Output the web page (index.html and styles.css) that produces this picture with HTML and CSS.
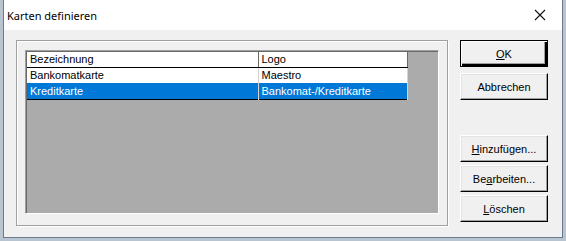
FILE: index.html
```html
<!DOCTYPE html>
<html lang="de">
<head>
    <meta charset="UTF-8">
    <title>Karten definieren</title>
    <link rel="stylesheet" href="styles.css">
</head>
<body>
    <div class="dialog">
        <div class="titlebar">
            <span class="title">Karten definieren</span>
            <span class="close">
                <svg width="12" height="12" viewBox="0 0 12 12"><path d="M1 1L11 11M11 1L1 11" stroke="#111" stroke-width="1.1" fill="none"/></svg>
            </span>
        </div>
        <div class="content">
            <div class="group">
                <div class="list">
                    <table class="cards">
                        <thead>
                            <tr>
                                <th class="col-name">Bezeichnung</th>
                                <th>Logo</th>
                            </tr>
                        </thead>
                        <tbody>
                            <tr>
                                <td>Bankomatkarte</td>
                                <td>Maestro</td>
                            </tr>
                            <tr class="selected">
                                <td>Kreditkarte</td>
                                <td>Bankomat-/Kreditkarte</td>
                            </tr>
                        </tbody>
                    </table>
                </div>
            </div>
            <div class="buttons">
                <button class="btn default"><u>O</u>K</button>
                <button class="btn">Abbrechen</button>
                <div class="spacer"></div>
                <button class="btn"><u>H</u>inzufügen...</button>
                <button class="btn">Be<u>a</u>rbeiten...</button>
                <button class="btn"><u>L</u>öschen</button>
            </div>
        </div>
    </div>
</body>
</html>
```

FILE: styles.css
```css
* {
    margin: 0;
    padding: 0;
    box-sizing: border-box;
}
body {
    background-color: #b8c4d0;
    font-family: "Liberation Sans", Arial, sans-serif;
    font-size: 11px;
    color: #000;
    width: 566px;
    height: 241px;
    overflow: hidden;
}
.dialog {
    margin-left: 3px;
    width: 560px;
    height: 238px;
    background: #f0f0f0;
    border-left: 1px solid #6b7b8d;
    border-right: 1px solid #6b7b8d;
    border-bottom: 1px solid #6b7b8d;
}
.titlebar {
    height: 30px;
    background: #fff;
    display: flex;
    align-items: center;
    justify-content: space-between;
    padding: 0 12px 0 3px;
}
.title {
    font-family: "Noto Sans", "Open Sans", sans-serif;
    font-size: 11px;
    color: #000;
}
.close {
    display: flex;
    margin-right: 4px;
}
.content {
    display: flex;
    padding: 10px 0 0 12px;
}
.group {
    width: 432px;
    height: 186px;
    border: 1px solid #a0a0a0;
    box-shadow: inset 1px 1px 0 #fff, 1px 1px 0 #fff;
    padding: 9px 8px 0 8px;
}
.list {
    height: 164px;
    background: #ababab;
    border-top: 1px solid #a0a0a0;
    border-left: 1px solid #a0a0a0;
    border-right: 1px solid #fff;
    border-bottom: 1px solid #fff;
    box-shadow: inset 1px 1px 0 #696969;
    padding: 1px 0 0 1px;
}
.cards {
    border-collapse: collapse;
    width: 381px;
    table-layout: fixed;
    border-right: 1px solid #000;
    border-bottom: 1px solid #000;
}
.cards th, .cards td {
    height: 16px;
    padding: 0 3px;
    text-align: left;
    font-weight: normal;
    white-space: nowrap;
    border-right: 1px solid #d4d4d4;
}
.cards th {
    height: 15px;
    background: #fff;
    border-bottom: 1px solid #000;
    border-right: 1px solid #696969;
}
.col-name {
    width: 231px;
}
.cards td {
    background: #fff;
}
.cards tr.selected td {
    background: #0078d7;
    color: #fff;
}
.buttons {
    display: flex;
    flex-direction: column;
    margin-left: 12px;
    width: 88px;
}
.btn {
    width: 88px;
    height: 27px;
    margin-bottom: 3px;
    font-family: "Liberation Sans", Arial, sans-serif;
    font-size: 11px;
    color: #000;
    background: #f0f0f0;
    border: 1px solid;
    border-color: #fff #000 #000 #fff;
    box-shadow: inset -1px -1px 0 #a0a0a0, inset 1px 1px 0 #e3e3e3;
}
.btn.default {
    border: 1px solid #000;
    box-shadow: inset 1px 1px 0 #fff, inset -2px -2px 0 #000, inset -3px -3px 0 #a0a0a0;
    margin-bottom: 6px;
}
.spacer {
    height: 32px;
}
```
